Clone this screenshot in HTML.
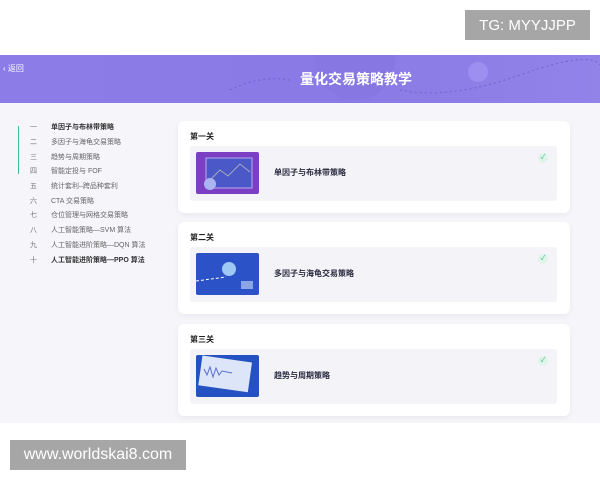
<!DOCTYPE html>
<html><head><meta charset="utf-8"><style>
*{margin:0;padding:0;box-sizing:border-box}
body{width:600px;height:480px;background:#fff;position:relative;overflow:hidden;font-family:"Liberation Sans","Noto Sans CJK SC",sans-serif}
.wm{position:absolute;background:#a6a6a6;color:#fff;font-size:15px;display:flex;align-items:center;justify-content:center}
.banner{position:absolute;left:0;top:55px;width:600px;height:48px;background:linear-gradient(90deg,#8b7ce8,#8a7ae6 60%,#9183e8);overflow:hidden}
.banner h1{position:absolute;left:300px;top:14px;color:#fff;font-size:14px;font-weight:bold;white-space:nowrap}
.back{position:absolute;left:3px;top:8px;color:#fff;font-size:8px}
.main{position:absolute;left:0;top:103px;width:600px;height:320px;background:#f5f5fa}
.side{position:absolute;left:30px;top:17px}
.side div{height:14.7px;font-size:7px;color:#666;display:flex;align-items:center}
.side div b{display:inline-block;width:21px;font-weight:normal;color:#777}
.side div.a{color:#333;font-weight:bold}
.line{position:absolute;left:18px;top:23px;width:1px;height:48px;background:#3cbf8f}
.card{position:absolute;left:178px;width:392px;height:92px;background:#fff;border-radius:6px;box-shadow:0 2px 6px rgba(0,0,0,.05)}
.card .t{position:absolute;left:12px;top:10px;font-size:8px;font-weight:bold;color:#222}
.item{position:absolute;left:12px;top:25px;width:367px;height:55px;background:#f3f3f8;border-radius:3px}
.th{position:absolute;left:6px;top:6px;width:63px;height:42px;border-radius:2px;overflow:hidden}
.item .n{position:absolute;left:84px;top:21px;font-size:8px;font-weight:bold;color:#2a2a40}
.ck{position:absolute;right:9px;top:7px;width:10px;height:10px;border-radius:50%;background:#dff5ea;color:#39b980;font-size:7px;text-align:center;line-height:10px}
</style></head><body>
<div class="wm" style="left:465px;top:10px;width:125px;height:30px">TG: MYYJJPP</div>
<div class="banner">
<svg width="600" height="48" style="position:absolute;left:0;top:0"><circle cx="355" cy="5" r="40" fill="#8374e0" opacity=".6"/><circle cx="478" cy="17" r="10" fill="#9d8ff0"/><path d="M230 35 Q260 20 290 25" stroke="#6f60d0" stroke-dasharray="2 3" fill="none"/><path d="M400 35 Q450 45 520 20 T600 10" stroke="#6f60d0" stroke-dasharray="2 3" fill="none"/></svg>
<div class="back">‹ 返回</div><h1>量化交易策略教学</h1></div>
<div class="main">
<div class="line"></div>
<div class="side">
<div class="a"><b>一</b>单因子与布林带策略</div>
<div><b>二</b>多因子与海龟交易策略</div>
<div><b>三</b>趋势与周期策略</div>
<div><b>四</b>智能定投与 FOF</div>
<div><b>五</b>统计套利–跨品种套利</div>
<div><b>六</b>CTA 交易策略</div>
<div><b>七</b>仓位管理与网格交易策略</div>
<div><b>八</b>人工智能策略—SVM 算法</div>
<div><b>九</b>人工智能进阶策略—DQN 算法</div>
<div class="a"><b>十</b>人工智能进阶策略—PPO 算法</div>
</div>
<div class="card" style="top:18px"><div class="t">第一关</div><div class="item"><div class="th" style="background:#7b3fc4"><svg width="63" height="42"><rect x="10" y="6" width="46" height="30" fill="#4a58c8" stroke="#b9a8f0"/><path d="M14 28 L24 18 L32 24 L44 12 L54 20" stroke="#aab" fill="none"/><circle cx="14" cy="32" r="6" fill="#a9b4f0"/></svg></div><div class="n">单因子与布林带策略</div><div class="ck">✓</div></div></div>
<div class="card" style="top:119px"><div class="t">第二关</div><div class="item"><div class="th" style="background:#2c52c8"><svg width="63" height="42"><circle cx="33" cy="16" r="7" fill="#9fc8f4"/><path d="M0 28 L30 24" stroke="#fff" stroke-dasharray="3 2"/><rect x="45" y="28" width="12" height="8" fill="#8aa6e8"/></svg></div><div class="n">多因子与海龟交易策略</div><div class="ck">✓</div></div></div>
<div class="card" style="top:221px"><div class="t">第三关</div><div class="item"><div class="th" style="background:#2452c2"><svg width="63" height="42"><rect x="4" y="4" width="50" height="30" fill="#dde6f8" transform="rotate(8 30 20)"/><path d="M8 14 l3 6 l3 -8 l3 10 l3 -9 l3 7 l3 -4 l10 2" stroke="#5a6fd0" fill="none"/></svg></div><div class="n">趋势与周期策略</div><div class="ck">✓</div></div></div>
</div>
<div class="wm" style="left:10px;top:440px;width:176px;height:30px;font-size:16px">www.worldskai8.com</div>
</body></html>
